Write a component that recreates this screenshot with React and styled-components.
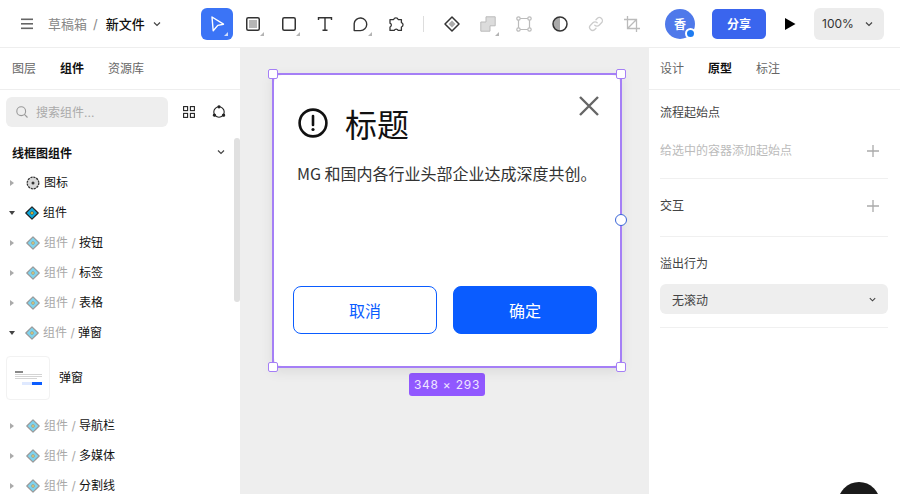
import React from "react";
import styled, { createGlobalStyle } from "styled-components";

const FONT = `"Inter", "Noto Sans CJK SC", sans-serif`;

const GlobalStyle = createGlobalStyle`
  html, body { margin: 0; padding: 0; background: #fff; }
  body { font-family: ${FONT}; overflow: hidden; }
  * { box-sizing: border-box; }
`;

const Page = styled.div`
  width: 900px;
  height: 494px;
  display: flex;
  flex-direction: column;
  overflow: hidden;
  position: relative;
`;

/* ---------- top bar ---------- */
const TopBar = styled.header`
  height: 48px;
  flex: none;
  display: flex;
  align-items: center;
  border-bottom: 1px solid #eeeeee;
  background: #fff;
`;
const FileArea = styled.div`
  width: 201px;
  display: flex;
  align-items: center;
  padding-left: 21px;
  font-size: 13px;
  color: #888;
  svg { display: block; }
`;
const Crumb = styled.span`
  margin-left: ${p => p.$gap || 0}px;
  color: ${p => (p.$current ? "#111" : "#888")};
  font-weight: ${p => (p.$current ? 500 : 400)};
  line-height: 18px;
`;
const ToolGroup = styled.div`
  display: flex;
  gap: 4px;
`;
const ToolBtn = styled.div`
  width: 32px;
  height: 32px;
  border-radius: 6px;
  display: flex;
  align-items: center;
  justify-content: center;
  position: relative;
  background: ${p => (p.$active ? "#3b74f6" : "transparent")};
  ${p => p.$corner && `
    &::after {
      content: "";
      position: absolute;
      right: 5px;
      bottom: 4px;
      border-style: solid;
      border-width: 0 0 4px 4px;
      border-color: transparent transparent ${p.$active ? "#cfdcfb" : "#b4b4b4"} transparent;
    }
  `}
`;
const ToolDivider = styled.div`
  width: 1px;
  height: 16px;
  background: #ddd;
  margin: 0 12px 0 10px;
`;
const Avatar = styled.div`
  width: 30px;
  height: 30px;
  margin-left: 17px;
  border-radius: 50%;
  background: #4f79ea;
  color: #fff;
  font-size: 12px;
  font-weight: 700;
  display: flex;
  align-items: center;
  justify-content: center;
  position: relative;
`;
const AvatarDot = styled.span`
  position: absolute;
  right: -1px;
  bottom: 0;
  width: 11px;
  height: 11px;
  border-radius: 50%;
  background: #1e7bf0;
  border: 2px solid #fff;
`;
const ShareBtn = styled.div`
  width: 54px;
  height: 30px;
  margin-left: 17px;
  border-radius: 5px;
  background: #3a65ee;
  color: #fff;
  font-size: 12px;
  font-weight: 700;
  display: flex;
  align-items: center;
  justify-content: center;
`;
const PlayBtn = styled.div`
  width: 48px;
  display: flex;
  justify-content: center;
`;
const ZoomBtn = styled.div`
  width: 70px;
  height: 32px;
  border-radius: 6px;
  background: #ececec;
  display: flex;
  align-items: center;
  padding-left: 8px;
  gap: 10px;
  font-size: 12px;
  color: #333;
`;

/* ---------- body ---------- */
const Body = styled.div`
  flex: 1;
  display: flex;
  min-height: 0;
`;
const LeftPanel = styled.aside`
  width: 240px;
  flex: none;
  background: #fff;
  position: relative;
`;
const Tabs = styled.div`
  height: 42px;
  display: flex;
  align-items: center;
  gap: 24px;
  padding-left: ${p => p.$inset || 12}px;
  border-bottom: 1px solid #eeeeee;
`;
const Tab = styled.span`
  font-size: 12px;
  line-height: 18px;
  color: ${p => (p.$active ? "#111" : "#666")};
  font-weight: ${p => (p.$active ? 700 : 400)};
`;
const SearchRow = styled.div`
  display: flex;
  align-items: center;
  padding: 6px 0 0 6px;
  height: 37px;
`;
const SearchBox = styled.div`
  width: 162px;
  height: 30px;
  border-radius: 6px;
  background: #eeeeee;
  display: flex;
  align-items: center;
  gap: 8px;
  padding-left: 10px;
  font-size: 12px;
  color: #aaa;
`;
const SearchTools = styled.div`
  display: flex;
  gap: 17px;
  margin-left: 15px;
  align-items: center;
`;
const SectionHead = styled.div`
  height: 30px;
  margin: 10px 0 1px;
  display: flex;
  align-items: center;
  justify-content: space-between;
  padding: 0 14px 0 12px;
  font-size: 12px;
  font-weight: 700;
  color: #111;
`;
const Row = styled.div`
  height: 30px;
  display: flex;
  align-items: center;
  padding-left: 9px;
  font-size: 12px;
  color: #111;
`;
const Caret = styled.span`
  width: 0;
  height: 0;
  flex: none;
  ${p => p.$open
    ? `border-left: 3.5px solid transparent; border-right: 3.5px solid transparent; border-top: 4px solid #444; margin-right: 10px;`
    : `border-top: 3.5px solid transparent; border-bottom: 3.5px solid transparent; border-left: 4px solid #aaa; margin: 0 12px 0 1px;`}
`;
const RowLabel = styled.span`
  margin-left: 4px;
  line-height: 16px;
  white-space: pre;
`;
const Muted = styled.span`
  color: #a8a8a8;
`;
const PreviewRow = styled.div`
  height: 63px;
  padding: 8px 0 0 6px;
  display: flex;
  align-items: flex-start;
  gap: 9px;
  font-size: 12px;
  color: #111;
`;
const PreviewLabel = styled.span`
  line-height: 44px;
`;
const Thumb = styled.div`
  width: 44px;
  height: 44px;
  border: 1px solid #f2f2f2;
  border-radius: 4px;
  background: #fff;
  padding: 14px 7px 0 8px;
  display: flex;
  flex-direction: column;
`;
const ThumbInner = styled.div`
  filter: blur(0.5px);
`;
const ThumbLine = styled.div`
  height: ${p => p.$h || 1}px;
  width: ${p => p.$w}px;
  background: ${p => p.$c || "#d4d4d4"};
  margin-bottom: ${p => p.$mb || 1}px;
`;
const ThumbBtns = styled.div`
  display: flex;
  justify-content: flex-end;
`;
const ThumbBtn = styled.div`
  width: 10px;
  height: 3px;
  background: ${p => (p.$primary ? "#0a5cff" : "#dfe9ff")};
`;
const Scrollbar = styled.div`
  position: absolute;
  right: 0;
  top: 90px;
  width: 6px;
  height: 164px;
  border-radius: 3px;
  background: #e0e0e0;
`;

/* ---------- canvas ---------- */
const Canvas = styled.main`
  flex: 1;
  background: #eeeeee;
  padding: 25px 0 0 32px;
  overflow: hidden;
`;
const FrameWrap = styled.div`
  width: 350px;
  display: flex;
  flex-direction: column;
  align-items: center;
  gap: 5px;
`;
const Frame = styled.div`
  width: 350px;
  height: 295px;
  position: relative;
  border: 2px solid #a57ff6;
  background: #e6e6e6;
  box-shadow: 0 4px 12px rgba(0, 0, 0, 0.08);
  display: flex;
`;
const Dialog = styled.div`
  flex: 1;
  background: #fff;
  border-radius: 8px;
  padding: 18px 18px 0;
  display: flex;
  flex-direction: column;
`;
const Handle = styled.span`
  position: absolute;
  width: 10px;
  height: 10px;
  background: #fff;
  border: 1.5px solid #a57ff6;
  border-radius: 2px;
  ${p => (p.$y === "top" ? "top: -6px;" : "bottom: -6px;")}
  ${p => (p.$x === "left" ? "left: -6px;" : "right: -6px;")}
`;
const ResizeDot = styled.span`
  position: absolute;
  right: -7px;
  top: 139px;
  width: 12px;
  height: 12px;
  border-radius: 50%;
  background: #fff;
  border: 1.5px solid #3a65d8;
`;
const CloseBtn = styled.div`
  position: absolute;
  right: 20px;
  top: 20px;
  line-height: 0;
`;
const TitleRow = styled.div`
  display: flex;
  align-items: center;
  gap: 16px;
  padding-left: 5px;
  height: 60px;
`;
const Title = styled.span`
  font-size: 32px;
  line-height: 60px;
  color: #111;
  font-family: "Noto Sans CJK SC", sans-serif;
`;
const Message = styled.p`
  margin: 7px 0 0 5px;
  font-size: 16px;
  line-height: 26px;
  color: #333;
  font-family: "Noto Sans CJK SC", sans-serif;
  white-space: nowrap;
`;
const Actions = styled.div`
  margin-top: auto;
  margin-bottom: 32px;
  padding-left: 1px;
  display: flex;
  gap: 16px;
`;
const DialogBtn = styled.div`
  width: 144px;
  height: 48px;
  border-radius: 8px;
  display: flex;
  align-items: center;
  justify-content: center;
  font-size: 16px;
  font-family: "Noto Sans CJK SC", sans-serif;
  border: 1px solid #0a5cff;
  color: ${p => (p.$primary ? "#fff" : "#0a5cff")};
  background: ${p => (p.$primary ? "#0a5cff" : "#fff")};
`;
const SizeTag = styled.div`
  width: 76px;
  height: 23px;
  border-radius: 3px;
  background: #9158ff;
  color: #eee6ff;
  font-size: 12px;
  letter-spacing: 0.75px;
  display: flex;
  align-items: center;
  justify-content: center;
`;

/* ---------- right panel ---------- */
const RightPanel = styled.aside`
  width: 251px;
  flex: none;
  background: #fff;
`;
const RightSection = styled.section`
  margin: 0 12px 0 11px;
  border-bottom: 1px solid #f0f0f0;
  height: ${p => p.$h}px;
  padding-top: ${p => p.$pt || 0}px;
  font-size: 12px;
`;
const PropRow = styled.div`
  height: 18px;
  display: flex;
  align-items: center;
  justify-content: space-between;
  padding-right: 8px;
  color: ${p => (p.$faint ? "#bbb" : "#444")};
  margin-top: ${p => p.$mt || 0}px;
  line-height: 18px;
`;
const Select = styled.div`
  height: 30px;
  margin-top: 11px;
  border-radius: 6px;
  background: #eeeeee;
  display: flex;
  align-items: center;
  justify-content: space-between;
  padding: 0 11px 0 12px;
  color: #444;
`;
const FloatButton = styled.div`
  position: absolute;
  right: 20px;
  top: 482px;
  width: 42px;
  height: 42px;
  border-radius: 50%;
  background: #1a1a1a;
`;

/* ---------- icons ---------- */
const Chevron = ({ size = 10, color = "#444" }) => (
  <svg width={size} height={size} viewBox="0 0 10 10" fill="none" stroke={color} strokeWidth="1.2">
    <path d="M2 3.5 5 6.5 8 3.5" />
  </svg>
);
const Plus = () => (
  <svg width="14" height="14" viewBox="0 0 14 14" stroke="#aaa" strokeWidth="1.3">
    <path d="M1 7h12M7 1v12" />
  </svg>
);
const Hamburger = () => (
  <svg width="12" height="12" viewBox="0 0 12 12" fill="#666">
    <rect y="0.5" width="12" height="1.6" /><rect y="5" width="12" height="1.6" /><rect y="9.5" width="12" height="1.6" />
  </svg>
);
const Cursor = () => (
  <svg width="18" height="18" viewBox="0 0 18 18" fill="none" stroke="#fff" strokeWidth="1.4" strokeLinejoin="round">
    <path d="M4 2 15.5 9.2 9.8 10.4 5.2 15.8Z" />
  </svg>
);
const FrameTool = () => (
  <svg width="14" height="14" viewBox="0 0 14 14">
    <rect x="0.75" y="0.75" width="12.5" height="12.5" rx="1.5" fill="#fff" stroke="#333" strokeWidth="1.5" />
    <rect x="3" y="3" width="8" height="8" fill="#b5b5b5" />
  </svg>
);
const RectTool = () => (
  <svg width="14" height="14" viewBox="0 0 14 14" fill="none" stroke="#333" strokeWidth="1.5">
    <rect x="0.75" y="0.75" width="12.5" height="12.5" rx="1.5" />
  </svg>
);
const TextTool = () => (
  <svg width="16" height="16" viewBox="0 0 16 16" fill="none" stroke="#333" strokeWidth="1.4">
    <path d="M1.5 4V1.8h13V4M8 1.8v12.4M5.5 14.2h5" />
  </svg>
);
const BubbleTool = () => (
  <svg width="16" height="16" viewBox="0 0 16 16" fill="none" stroke="#333" strokeWidth="1.4">
    <path d="M1.2 14.6V7.5a6.3 6.3 0 1 1 6.3 7.1Z" strokeLinejoin="round" />
  </svg>
);
const PluginTool = () => (
  <svg width="16" height="16" viewBox="0 0 16 16" fill="none" stroke="#333" strokeWidth="1.3" strokeLinejoin="round">
    <path d="M1 3.6h3.6a2.4 2.4 0 0 1 4.6 0h3.2v3a2.3 2.3 0 0 1 0 4.4v3.4H9.2a2.2 2.2 0 0 0-4 0H1v-3.4a2 2 0 0 0 0-3.8Z" />
  </svg>
);
const ComponentTool = () => (
  <svg width="16" height="16" viewBox="0 0 16 16">
    <path d="M8 1 15 8 8 15 1 8Z" fill="#fff" stroke="#333" strokeWidth="1.5" strokeLinejoin="round" />
    <path d="M8 4.5 11.5 8 8 11.5 4.5 8Z" fill="#aaa" />
  </svg>
);
const BooleanTool = () => (
  <svg width="16" height="16" viewBox="0 0 16 16" fill="#dcdcdc" stroke="#bbb" strokeWidth="1">
    <path d="M6 .8h9.2v9H10v5.4H.8V6H6Z" strokeLinejoin="round" />
  </svg>
);
const BoundsTool = () => (
  <svg width="16" height="16" viewBox="0 0 16 16" fill="#fff" stroke="#bbb" strokeWidth="1.2">
    <path d="M2.5 2.5h11v11h-11z" fill="none" />
    <circle cx="2.5" cy="2.5" r="1.7" /><circle cx="13.5" cy="2.5" r="1.7" />
    <circle cx="2.5" cy="13.5" r="1.7" /><circle cx="13.5" cy="13.5" r="1.7" />
  </svg>
);
const MaskTool = () => (
  <svg width="16" height="16" viewBox="0 0 16 16">
    <path d="M8 1a7 7 0 0 0 0 14Z" fill="#aaa" />
    <circle cx="8" cy="8" r="7" fill="none" stroke="#333" strokeWidth="1.5" />
  </svg>
);
const LinkTool = () => (
  <svg width="16" height="16" viewBox="0 0 16 16" fill="none" stroke="#ccc" strokeWidth="1.3" strokeLinecap="round">
    <path d="M6.8 9.2a3 3 0 0 0 4.3 0l2.4-2.4a3 3 0 0 0-4.3-4.3L8 3.7" />
    <path d="M9.2 6.8a3 3 0 0 0-4.3 0L2.5 9.2a3 3 0 0 0 4.3 4.3L8 12.3" />
  </svg>
);
const CropTool = () => (
  <svg width="16" height="16" viewBox="0 0 16 16" fill="none" stroke="#bbb" strokeWidth="1.3">
    <path d="M3.5 0v12.5H16M0 3.5h12.5V16M3.5 12.5l9-9" />
  </svg>
);
const SearchIcon = () => (
  <svg width="12" height="12" viewBox="0 0 12 12" fill="none" stroke="#999" strokeWidth="1.1">
    <circle cx="5.2" cy="5.2" r="4.4" /><path d="M8.4 8.4 11.5 11.5" />
  </svg>
);
const GridIcon = () => (
  <svg width="12" height="12" viewBox="0 0 12 12" fill="none" stroke="#222" strokeWidth="1.1">
    <rect x="0.6" y="0.6" width="4" height="4" /><rect x="7.4" y="0.6" width="4" height="4" />
    <rect x="0.6" y="7.4" width="4" height="4" /><rect x="7.4" y="7.4" width="4" height="4" />
  </svg>
);
const LibIcon = () => (
  <svg width="14" height="14" viewBox="0 0 14 14" fill="none" stroke="#222" strokeWidth="1.1">
    <circle cx="7" cy="7" r="5.2" />
    <circle cx="7" cy="1.8" r="1.1" fill="#222" /><circle cx="2.4" cy="10.2" r="1.1" fill="#222" /><circle cx="11.6" cy="10.2" r="1.1" fill="#222" />
  </svg>
);
const GearIcon = () => (
  <svg width="14" height="14" viewBox="0 0 14 14">
    <circle cx="7" cy="7" r="5.8" fill="#d8d8d8" stroke="#333" strokeWidth="1.3" strokeDasharray="2.2 0.8" />
    <circle cx="7" cy="7" r="1.5" fill="#333" />
  </svg>
);
const ComponentIcon = ({ faded }) => (
  <svg width="14" height="14" viewBox="0 0 14 14">
    <path d="M7 .8 13.2 7 7 13.2 .8 7Z" fill={faded ? "#80d4ee" : "#13a9dc"} stroke={faded ? "#999" : "#222"} strokeWidth="1.2" strokeLinejoin="round" />
    <circle cx="7" cy="7" r="1.5" fill={faded ? "#d8c878" : "#e8c53a"} stroke={faded ? "#888" : "#333"} strokeWidth="0.5" />
  </svg>
);
const AlertIcon = () => (
  <svg width="32" height="32" viewBox="0 0 32 32" fill="none" stroke="#111" strokeWidth="2.6">
    <circle cx="16" cy="16" r="13.4" />
    <path d="M16 9v9" strokeLinecap="round" />
    <circle cx="16" cy="22.5" r="1.6" fill="#111" stroke="none" />
  </svg>
);
const CloseIcon = () => (
  <svg width="22" height="22" viewBox="0 0 22 22" stroke="#666" strokeWidth="2.4">
    <path d="M2 2 20 20M20 2 2 20" />
  </svg>
);

const treeTop = [
  { open: false, icon: "gear", name: "图标" },
  { open: true, icon: "solid", name: "组件" },
  { open: false, prefix: true, name: "按钮" },
  { open: false, prefix: true, name: "标签" },
  { open: false, prefix: true, name: "表格" },
  { open: true, prefix: true, name: "弹窗" },
];
const treeBottom = ["导航栏", "多媒体", "分割线"];

const TreeRow = ({ open, icon, prefix, name }) => (
  <Row>
    <Caret $open={open} />
    {icon === "gear" ? <GearIcon /> : <ComponentIcon faded={icon !== "solid"} />}
    <RowLabel>
      {prefix && <Muted>组件 / </Muted>}
      {name}
    </RowLabel>
  </Row>
);

export default function App() {
  return (
    <Page>
      <GlobalStyle />
      <TopBar>
        <FileArea>
          <Hamburger />
          <Crumb $gap={15}>草稿箱</Crumb>
          <Crumb $gap={6}>/</Crumb>
          <Crumb $gap={8} $current>新文件</Crumb>
          <Crumb $gap={7}><Chevron /></Crumb>
        </FileArea>
        <ToolGroup>
          <ToolBtn $active $corner><Cursor /></ToolBtn>
          <ToolBtn $corner><FrameTool /></ToolBtn>
          <ToolBtn $corner><RectTool /></ToolBtn>
          <ToolBtn><TextTool /></ToolBtn>
          <ToolBtn $corner><BubbleTool /></ToolBtn>
          <ToolBtn><PluginTool /></ToolBtn>
        </ToolGroup>
        <ToolDivider />
        <ToolGroup>
          <ToolBtn><ComponentTool /></ToolBtn>
          <ToolBtn $corner><BooleanTool /></ToolBtn>
          <ToolBtn><BoundsTool /></ToolBtn>
          <ToolBtn><MaskTool /></ToolBtn>
          <ToolBtn><LinkTool /></ToolBtn>
          <ToolBtn><CropTool /></ToolBtn>
        </ToolGroup>
        <Avatar>香<AvatarDot /></Avatar>
        <ShareBtn>分享</ShareBtn>
        <PlayBtn>
          <svg width="12" height="12" viewBox="0 0 12 12" fill="#000"><path d="M1 0 11.5 6 1 12Z" /></svg>
        </PlayBtn>
        <ZoomBtn>100%<Chevron /></ZoomBtn>
      </TopBar>
      <Body>
        <LeftPanel>
          <Tabs>
            <Tab>图层</Tab>
            <Tab $active>组件</Tab>
            <Tab>资源库</Tab>
          </Tabs>
          <SearchRow>
            <SearchBox><SearchIcon />搜索组件...</SearchBox>
            <SearchTools><GridIcon /><LibIcon /></SearchTools>
          </SearchRow>
          <SectionHead>线框图组件<Chevron /></SectionHead>
          {treeTop.map(item => <TreeRow key={item.name} {...item} />)}
          <PreviewRow>
            <Thumb>
              <ThumbInner>
                <ThumbLine $w={8} $h={2} $c="#888" $mb={1} />
                <ThumbLine $w={27} />
                <ThumbLine $w={27} />
                <ThumbLine $w={22} $mb={3} />
                <ThumbBtns><ThumbBtn /><ThumbBtn $primary /></ThumbBtns>
              </ThumbInner>
            </Thumb>
            <PreviewLabel>弹窗</PreviewLabel>
          </PreviewRow>
          {treeBottom.map(name => <TreeRow key={name} open={false} prefix name={name} />)}
          <Scrollbar />
        </LeftPanel>
        <Canvas>
          <FrameWrap>
            <Frame>
              <Dialog>
                <TitleRow>
                  <AlertIcon />
                  <Title>标题</Title>
                </TitleRow>
                <Message>MG 和国内各行业头部企业达成深度共创。</Message>
                <Actions>
                  <DialogBtn>取消</DialogBtn>
                  <DialogBtn $primary>确定</DialogBtn>
                </Actions>
              </Dialog>
              <CloseBtn><CloseIcon /></CloseBtn>
              <Handle $x="left" $y="top" />
              <Handle $x="right" $y="top" />
              <Handle $x="left" $y="bottom" />
              <Handle $x="right" $y="bottom" />
              <ResizeDot />
            </Frame>
            <SizeTag>348 × 293</SizeTag>
          </FrameWrap>
        </Canvas>
        <RightPanel>
          <Tabs $inset={11}>
            <Tab>设计</Tab>
            <Tab $active>原型</Tab>
            <Tab>标注</Tab>
          </Tabs>
          <RightSection $h={89} $pt={14}>
            <PropRow>流程起始点</PropRow>
            <PropRow $faint $mt={20}>给选中的容器添加起始点<Plus /></PropRow>
          </RightSection>
          <RightSection $h={58} $pt={18}>
            <PropRow>交互<Plus /></PropRow>
          </RightSection>
          <RightSection $h={91} $pt={18}>
            <PropRow>溢出行为</PropRow>
            <Select>无滚动<Chevron size={9} /></Select>
          </RightSection>
        </RightPanel>
      </Body>
      <FloatButton />
    </Page>
  );
}
